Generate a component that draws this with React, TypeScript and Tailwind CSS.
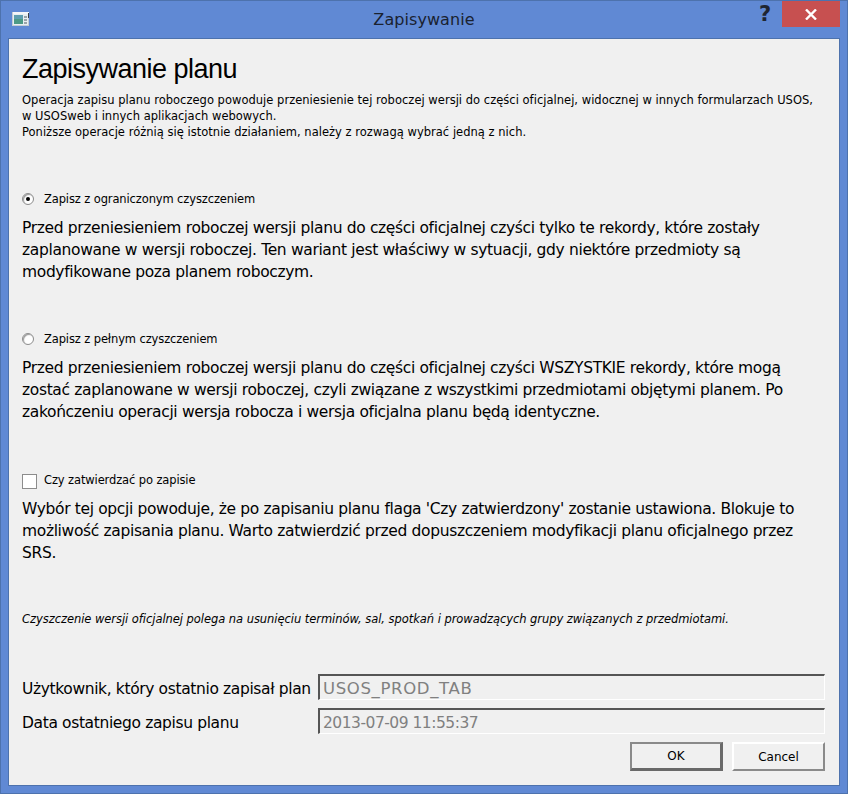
const font = { fontFamily: '"DejaVu Sans", sans-serif' };
const headingFont = { fontFamily: '"Liberation Sans", sans-serif' };

function Option({
  mark,
  label,
  lines,
  className,
}: {
  mark: React.ReactNode;
  label: string;
  lines: string[];
  className?: string;
}) {
  return (
    <div className={className}>
      <div className="flex h-[16px] items-center">
        <div className="flex w-[22px] shrink-0 items-center">{mark}</div>
        <span className="whitespace-nowrap text-[11.5px] tracking-[-0.12px]">{label}</span>
      </div>
      <div className="mt-[9px] text-[15.5px] leading-[22px] tracking-[-0.35px]">
        {lines.map((l) => (
          <div key={l} className="whitespace-nowrap">
            {l}
          </div>
        ))}
      </div>
    </div>
  );
}

function Radio({ checked }: { checked?: boolean }) {
  return (
    <div className="mb-[3px] flex h-[12px] w-[12px] items-center justify-center rounded-full border border-[#8c8c8c] bg-white shadow-[inset_1px_1px_1px_#9a9a9a]">
      {checked && <div className="h-[4px] w-[4px] rounded-full bg-black" />}
    </div>
  );
}

function Field({ label, value, valueClass }: { label: string; value: string; valueClass: string }) {
  return (
    <div className="flex h-[26px] items-center">
      <div className="w-[296px] shrink-0 whitespace-nowrap pt-[6px] text-[15.5px] tracking-[-0.37px]">{label}</div>
      <div
        className={
          "flex h-[26px] w-[507px] items-center border-t-2 border-l-2 border-r border-b border-t-[#555] border-l-[#555] border-r-white border-b-white bg-[#f0f0f0] pl-[3px] pt-[4px] text-[#808080] " +
          valueClass
        }
      >
        {value}
      </div>
    </div>
  );
}

function DialogButton({ label, primary }: { label: string; primary?: boolean }) {
  return (
    <button
      type="button"
      className={
        primary
          ? "h-[29px] w-[93px] border-t-2 border-l-2 border-r-[3px] border-b-[3px] border-t-[#8a8a8a] border-l-[#8a8a8a] border-r-[#696969] border-b-[#696969] bg-[#f0f0f0] text-[12px]"
          : "h-[29px] w-[93px] border-t-2 border-l-2 border-r-2 border-b-2 border-t-white border-l-white border-r-[#8a8a8a] border-b-[#8a8a8a] bg-[#f0f0f0] text-[12px]"
      }
    >
      {label}
    </button>
  );
}

export default function App() {
  return (
    <div
      style={font}
      className="flex h-[794px] w-[848px] flex-col border border-[#4d72ad] bg-[#6089d4] text-black"
    >
      {/* title bar */}
      <div className="relative flex h-[37px] shrink-0 items-center justify-center">
        <svg className="absolute left-[11px] top-[10px]" width="18" height="16" viewBox="0 0 18 16">
          <rect x="0.5" y="1.5" width="16" height="13" fill="#e8eef2" stroke="#c4ccd4" />
          <rect x="1" y="1" width="16" height="2" fill="#f4f6f8" />
          <rect x="2" y="4" width="9" height="9" fill="#4d9a86" />
          <rect x="2" y="4" width="9" height="4" fill="#5e9fb0" />
          <rect x="12" y="5" width="3" height="2" fill="#9aa4aa" />
          <rect x="12" y="8" width="3" height="2" fill="#9aa4aa" />
          <rect x="12" y="11" width="3" height="2" fill="#9aa4aa" />
          <rect x="16" y="2" width="1" height="5" fill="#3a4048" />
        </svg>
        <span className="text-[16px] tracking-[0.07px] text-[#1a2230]">Zapisywanie</span>
        <span className="absolute left-[758px] top-[1px] text-[21px] font-bold leading-[24px] text-[#1f2530]">?</span>
        <div className="absolute left-[781px] top-0 flex h-[26px] w-[58px] items-center justify-center bg-[#c75050]">
          <svg width="12" height="11" viewBox="0 0 12 11">
            <path d="M1 0.5 L11 10.5 M11 0.5 L1 10.5" stroke="#fff" strokeWidth="2.4" />
          </svg>
        </div>
      </div>

      {/* content */}
      <div className="mx-[7px] flex h-[748px] flex-col border border-[#4d72ad] bg-[#f0f0f0] pl-[13px] pr-[14px]">
        <h1 style={headingFont} className="mt-[12px] h-[36px] whitespace-nowrap text-[27px] leading-[36px] tracking-[-0.5px]">
          Zapisywanie planu
        </h1>
        <div className="mt-[5px] text-[11.5px] leading-[16px] tracking-[0.02px]">
          <div className="whitespace-nowrap">
            Operacja zapisu planu roboczego powoduje przeniesienie tej roboczej wersji do części oficjalnej, widocznej w innych formularzach USOS,
          </div>
          <div className="whitespace-nowrap">w USOSweb i innych aplikacjach webowych.</div>
          <div className="whitespace-nowrap">
            Poniższe operacje różnią się istotnie działaniem, należy z rozwagą wybrać jedną z nich.
          </div>
        </div>

        <Option
          className="mt-[52px]"
          mark={<Radio checked />}
          label="Zapisz z ograniczonym czyszczeniem"
          lines={[
            "Przed przeniesieniem roboczej wersji planu do części oficjalnej czyści tylko te rekordy, które zostały",
            "zaplanowane w wersji roboczej. Ten wariant jest właściwy w sytuacji, gdy niektóre przedmioty są",
            "modyfikowane poza planem roboczym.",
          ]}
        />
        <Option
          className="mt-[49px]"
          mark={<Radio />}
          label="Zapisz z pełnym czyszczeniem"
          lines={[
            "Przed przeniesieniem roboczej wersji planu do części oficjalnej czyści WSZYSTKIE rekordy, które mogą",
            "zostać zaplanowane w wersji roboczej, czyli związane z wszystkimi przedmiotami objętymi planem. Po",
            "zakończeniu operacji wersja robocza i wersja oficjalna planu będą identyczne.",
          ]}
        />
        <Option
          className="mt-[50px]"
          mark={<div className="h-[15px] w-[15px] border border-[#8c8c8c] bg-white" />}
          label="Czy zatwierdzać po zapisie"
          lines={[
            "Wybór tej opcji powoduje, że po zapisaniu planu flaga 'Czy zatwierdzony' zostanie ustawiona. Blokuje to",
            "możliwość zapisania planu. Warto zatwierdzić przed dopuszczeniem modyfikacji planu oficjalnego przez",
            "SRS.",
          ]}
        />

        <div className="mt-[47px] whitespace-nowrap text-[11.5px] italic leading-[16px] tracking-[-0.05px]">
          Czyszczenie wersji oficjalnej polega na usunięciu terminów, sal, spotkań i prowadzących grupy związanych z przedmiotami.
        </div>

        <div className="mt-[47px] flex flex-col gap-[8px]">
          <Field label="Użytkownik, który ostatnio zapisał plan" value="USOS_PROD_TAB" valueClass="text-[16.5px] tracking-[0.65px]" />
          <Field label="Data ostatniego zapisu planu" value="2013-07-09 11:55:37" valueClass="text-[15.5px] tracking-[-0.5px]" />
        </div>

        <div className="mt-[8px] flex justify-end gap-[9px]">
          <DialogButton primary label="OK" />
          <DialogButton label="Cancel" />
        </div>
      </div>
    </div>
  );
}
